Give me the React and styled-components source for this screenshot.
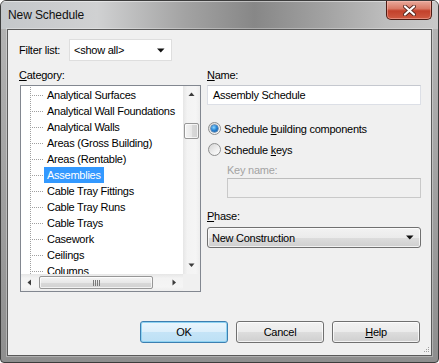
import React from 'react';
import styled, { createGlobalStyle, css } from 'styled-components';

const Global = createGlobalStyle`
  html, body { margin: 0; padding: 0; background: #ffffff; }
  body { font-family: "Liberation Sans", Arial, sans-serif; }
  * { box-sizing: border-box; }
`;

const Window = styled.div`
  width: 439px;
  height: 363px;
  border: 1px solid #3c3c3c;
  border-radius: 6px 6px 4px 4px;
  background: linear-gradient(180deg, #b6b6b6 0%, #a4a4a4 45%, #8e8e8e 100%);
  display: flex;
  flex-direction: column;
  overflow: hidden;
`;

const TitleBar = styled.div`
  height: 28px;
  flex: none;
  display: flex;
  align-items: flex-start;
  background: linear-gradient(90deg, #c4c7ca 0%, #d0d1d2 22%, #a3a3a3 42%, #878787 58%, #a2a2a2 74%, #bdbdbd 88%, #c9c9c9 100%);
  box-shadow: inset 0 1px 0 rgba(255, 255, 255, 0.45);
`;

const Title = styled.div`
  flex: 1;
  padding-left: 7px;
  line-height: 28px;
  font-size: 12px;
  color: #111;
  letter-spacing: -0.1px;
`;

const CloseButton = styled.div`
  width: 46px;
  height: 19px;
  margin-right: 6px;
  border: 1px solid #4e1b13;
  border-top: none;
  border-radius: 0 0 5px 5px;
  background: linear-gradient(180deg, #e8a99b 0%, #d97a66 42%, #c3412b 55%, #cf5a42 100%);
  box-shadow: inset 0 0 0 1px rgba(255, 200, 190, 0.45);
  display: flex;
  align-items: center;
  justify-content: center;
`;

const Client = styled.div`
  flex: 1;
  margin: 0 6px 6px;
  border: 1px solid #5a5a5a;
  box-shadow: 0 0 0 1px rgba(255, 255, 255, 0.3);
  background: #f0f0f0;
  display: flex;
  flex-direction: column;
  padding: 9px 10px 12px 11px;
  position: relative;
  font-size: 11px;
  letter-spacing: -0.25px;
  color: #000;
`;

const FilterRow = styled.div`
  display: flex;
  align-items: center;
  height: 22px;
`;

const FilterLabel = styled.span`
  width: 50px;
`;

const DropBox = styled.div`
  display: flex;
  align-items: center;
  justify-content: space-between;
  width: ${(p) => p.$width || 'auto'};
  height: ${(p) => p.$height || 22}px;
  margin-top: ${(p) => p.$top || 0}px;
  padding: 0 6px 0 ${(p) => p.$padLeft || 4}px;
  ${(p) =>
    p.$button
      ? css`
          border: 1px solid #707070;
          border-radius: 3px;
          background: linear-gradient(180deg, #f2f2f2 0%, #ebebeb 50%, #dddddd 51%, #cfcfcf 100%);
          box-shadow: inset 0 0 0 1px rgba(255, 255, 255, 0.7);
        `
      : css`
          border: 1px solid #dedede;
          background: #ffffff;
        `}
`;

const Columns = styled.div`
  display: grid;
  grid-template-columns: 182px 214px;
  column-gap: 6px;
  margin-top: 7px;
`;

const Column = styled.div`
  display: flex;
  flex-direction: column;
`;

const Label = styled.div`
  height: 14px;
  line-height: 14px;
  margin-top: ${(p) => p.$top || 0}px;
  margin-left: ${(p) => p.$indent || 0}px;
  color: ${(p) => (p.$disabled ? '#a3a3a3' : '#000')};
`;

const ListBox = styled.div`
  margin: 3px 0 0 1px;
  width: 181px;
  height: 207px;
  border: 1px solid #828790;
  background: #ffffff;
  display: grid;
  grid-template-columns: 1fr 17px;
  grid-template-rows: 1fr 17px;
`;

const Viewport = styled.div`
  overflow: hidden;
  padding-top: 1px;
`;

const TreeItem = styled.div`
  position: relative;
  height: 16px;
  line-height: 16px;
  padding-left: 26px;
  white-space: nowrap;

  &::before {
    content: '';
    position: absolute;
    left: 9px;
    top: 0;
    width: 1px;
    height: 16px;
    background: repeating-linear-gradient(180deg, #a0a0a0 0 1px, transparent 1px 2px);
  }
  &::after {
    content: '';
    position: absolute;
    left: 11px;
    top: 8px;
    width: 12px;
    height: 1px;
    background: repeating-linear-gradient(90deg, #a0a0a0 0 1px, transparent 1px 2px);
  }
`;

const ItemText = styled.span`
  display: inline-block;
  height: 16px;
  padding: 0 3px;
  margin-left: -3px;
  ${(p) =>
    p.$selected &&
    css`
      background: #3399ff;
      color: #ffffff;
    `}
`;

const VScroll = styled.div`
  display: flex;
  flex-direction: column;
  background: linear-gradient(90deg, #e6e6e6 0%, #f3f3f3 25%, #f5f5f5 75%, #ededed 100%);
`;

const HScroll = styled.div`
  display: flex;
  align-items: flex-start;
  background: linear-gradient(180deg, #e6e6e6 0%, #f3f3f3 25%, #f5f5f5 75%, #ededed 100%);
`;

const Corner = styled.div`
  background: #f0f0f0;
`;

const ArrowCell = styled.div`
  width: 17px;
  height: 17px;
  flex: none;
  display: flex;
  align-items: center;
  justify-content: center;
`;

const Spacer = styled.div`
  flex: 1;
`;

const VThumb = styled.div`
  width: 15px;
  height: 16px;
  margin: 20px 1px 0;
  border: 1px solid #979797;
  border-radius: 2px;
  background: linear-gradient(90deg, #f4f4f4 0%, #e8e8e8 50%, #d9d9d9 51%, #d2d2d2 100%);
  box-shadow: inset 0 0 0 1px rgba(255, 255, 255, 0.7);
`;

const HThumb = styled.div`
  width: 114px;
  height: 13px;
  margin: 2px 0 0 1px;
  border: 1px solid #979797;
  border-radius: 2px;
  background: linear-gradient(180deg, #f4f4f4 0%, #e8e8e8 50%, #d9d9d9 51%, #d2d2d2 100%);
  box-shadow: inset 0 0 0 1px rgba(255, 255, 255, 0.7);
  display: flex;
  align-items: center;
  justify-content: center;
`;

const TextBox = styled.div`
  height: 20px;
  margin-top: ${(p) => p.$top || 0}px;
  margin-left: ${(p) => p.$indent || 0}px;
  line-height: 18px;
  padding-left: 5px;
  border: 1px solid ${(p) => (p.$disabled ? '#c9c9c9' : '#dcdfe6')};
  border-top-color: ${(p) => (p.$disabled ? '#bdbdbd' : '#c5c8cf')};
  background: ${(p) => (p.$disabled ? '#f0f0f0' : '#ffffff')};
`;

const RadioRow = styled.div`
  display: flex;
  align-items: center;
  height: 17px;
  margin-top: ${(p) => p.$top || 0}px;
  padding-left: 1px;
  gap: 3px;
`;

const RadioCircle = styled.span`
  width: 13px;
  height: 13px;
  border-radius: 50%;
  border: 1px solid #8e8f8f;
  background: linear-gradient(135deg, #d4d4d4 0%, #f0f0f0 60%, #ffffff 100%);
  display: flex;
  align-items: center;
  justify-content: center;

  ${(p) =>
    p.$checked &&
    css`
      &::after {
        content: '';
        width: 7px;
        height: 7px;
        border-radius: 50%;
        background: radial-gradient(circle at 40% 35%, #8fd8ff 0%, #2a86d6 45%, #0f4e91 100%);
        box-shadow: 0 0 0 0.5px #1b4f86;
      }
    `}
`;

const Footer = styled.div`
  margin-top: auto;
  display: flex;
  justify-content: flex-end;
  gap: 8px;
  padding-right: 1px;
`;

const Button = styled.div`
  width: 88px;
  height: 22px;
  display: flex;
  align-items: center;
  justify-content: center;
  border: 1px solid #707070;
  border-radius: 3px;
  background: linear-gradient(180deg, #f2f2f2 0%, #ebebeb 50%, #dddddd 51%, #cfcfcf 100%);
  box-shadow: inset 0 0 0 1px rgba(255, 255, 255, 0.75);
  ${(p) =>
    p.$default &&
    css`
      border-color: #3c7fb1;
      background: linear-gradient(180deg, #eaf6fd 0%, #dceffb 50%, #c5e4f7 51%, #bde0f5 100%);
      box-shadow: inset 0 0 0 1px #8fd3f2;
    `}
`;

const Grip = styled.svg`
  position: absolute;
  right: 1px;
  bottom: 2px;
`;

function Arrow({ dir }) {
  const paths = {
    up: 'M0.5 4 L3.5 0.5 L6.5 4 Z',
    down: 'M0.5 0.5 L6.5 0.5 L3.5 4 Z',
  };
  if (dir === 'left' || dir === 'right') {
    const d = dir === 'left' ? 'M4 0.5 L0.5 3.5 L4 6.5 Z' : 'M0.5 0.5 L4 3.5 L0.5 6.5 Z';
    return (
      <svg width="5" height="7" viewBox="0 0 5 7">
        <path d={d} fill="#3b3b3b" />
      </svg>
    );
  }
  return (
    <svg width="7" height="5" viewBox="0 0 7 5">
      <path d={paths[dir]} fill="#3b3b3b" />
    </svg>
  );
}

function DropArrow() {
  return (
    <svg width="8" height="5" viewBox="0 0 8 5">
      <path d="M0 0.5 H7.5 L3.75 4.5 Z" fill="#111" />
    </svg>
  );
}

const items = [
  'Analytical Surfaces',
  'Analytical Wall Foundations',
  'Analytical Walls',
  'Areas (Gross Building)',
  'Areas (Rentable)',
  'Assemblies',
  'Cable Tray Fittings',
  'Cable Tray Runs',
  'Cable Trays',
  'Casework',
  'Ceilings',
  'Columns',
];

export default function App() {
  return (
    <>
      <Global />
      <Window>
        <TitleBar>
          <Title>New Schedule</Title>
          <CloseButton>
            <svg width="13" height="11" viewBox="0 0 13 11">
              <path d="M2 1.5 L11 9.5 M11 1.5 L2 9.5" stroke="#5a2a22" strokeWidth="4" strokeLinecap="round" />
              <path d="M2 1.5 L11 9.5 M11 1.5 L2 9.5" stroke="#ffffff" strokeWidth="2.2" strokeLinecap="round" />
            </svg>
          </CloseButton>
        </TitleBar>
        <Client>
          <FilterRow>
            <FilterLabel>Filter list:</FilterLabel>
            <DropBox $width="103px" $padLeft={4}>
              <span>&lt;show all&gt;</span>
              <DropArrow />
            </DropBox>
          </FilterRow>
          <Columns>
            <Column>
              <Label>
                <u>C</u>ategory:
              </Label>
              <ListBox>
                <Viewport>
                  {items.map((it) => (
                    <TreeItem key={it}>
                      <ItemText $selected={it === 'Assemblies'}>{it}</ItemText>
                    </TreeItem>
                  ))}
                </Viewport>
                <VScroll>
                  <ArrowCell>
                    <Arrow dir="up" />
                  </ArrowCell>
                  <VThumb />
                  <Spacer />
                  <ArrowCell>
                    <Arrow dir="down" />
                  </ArrowCell>
                </VScroll>
                <HScroll>
                  <ArrowCell>
                    <Arrow dir="left" />
                  </ArrowCell>
                  <HThumb>
                    <svg width="7" height="6" viewBox="0 0 7 6">
                      <path d="M0.5 0 V6 M2.5 0 V6 M4.5 0 V6 M6.5 0 V6" stroke="#7a7a7a" strokeWidth="1" />
                    </svg>
                  </HThumb>
                  <Spacer />
                  <ArrowCell>
                    <Arrow dir="right" />
                  </ArrowCell>
                </HScroll>
                <Corner />
              </ListBox>
            </Column>
            <Column>
              <Label>
                <u>N</u>ame:
              </Label>
              <TextBox $top={3}>Assembly Schedule</TextBox>
              <RadioRow $top={15}>
                <RadioCircle $checked />
                <span>
                  Schedule <u>b</u>uilding components
                </span>
              </RadioRow>
              <RadioRow $top={4}>
                <RadioCircle />
                <span>
                  Schedule <u>k</u>eys
                </span>
              </RadioRow>
              <Label $top={5} $indent={20} $disabled>
                Key name:
              </Label>
              <TextBox $top={1} $indent={20} $disabled />
              <Label $top={11}>
                <u>P</u>hase:
              </Label>
              <DropBox $button $top={4} $height={21} $padLeft={4}>
                <span>New Construction</span>
                <DropArrow />
              </DropBox>
            </Column>
          </Columns>
          <Footer>
            <Button $default>OK</Button>
            <Button>Cancel</Button>
            <Button>
              <span>
                <u>H</u>elp
              </span>
            </Button>
          </Footer>
          <Grip width="7" height="7" viewBox="0 0 7 7">
            <rect x="5" y="1" width="1" height="1" fill="#a0a0a0" />
            <rect x="3" y="3" width="1" height="1" fill="#a0a0a0" />
            <rect x="5" y="3" width="1" height="1" fill="#a0a0a0" />
            <rect x="1" y="5" width="1" height="1" fill="#a0a0a0" />
            <rect x="3" y="5" width="1" height="1" fill="#a0a0a0" />
            <rect x="5" y="5" width="1" height="1" fill="#a0a0a0" />
          </Grip>
        </Client>
      </Window>
    </>
  );
}
